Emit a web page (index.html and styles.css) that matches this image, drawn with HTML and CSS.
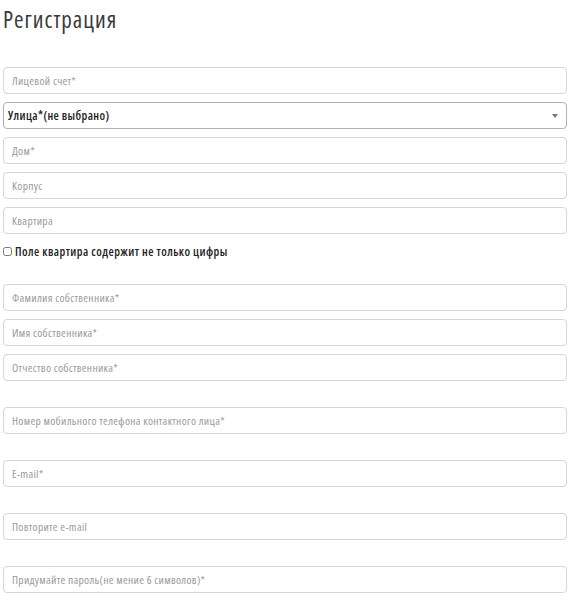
FILE: index.html
```html
<!DOCTYPE html>
<html lang="ru">
<head>
<meta charset="utf-8">
<title>Регистрация</title>
<link rel="stylesheet" href="styles.css">
</head>
<body>
<div class="page">
  <h1 class="title">Регистрация</h1>
  <form class="form">
    <div class="group">
      <input class="field" type="text" placeholder="Лицевой счет*">
      <div class="select">
        <span class="select-text">Улица*(не выбрано)</span>
        <span class="select-arrow"></span>
      </div>
      <input class="field" type="text" placeholder="Дом*">
      <input class="field" type="text" placeholder="Корпус">
      <input class="field" type="text" placeholder="Квартира">
    </div>
    <label class="check">
      <input class="check-box" type="checkbox">
      <span class="check-label">Поле квартира содержит не только цифры</span>
    </label>
    <div class="group group-owner">
      <input class="field" type="text" placeholder="Фамилия собственника*">
      <input class="field" type="text" placeholder="Имя собственника*">
      <input class="field" type="text" placeholder="Отчество собственника*">
    </div>
    <input class="field field-spaced" type="text" placeholder="Номер мобильного телефона контактного лица*">
    <input class="field field-spaced" type="text" placeholder="E-mail*">
    <input class="field field-spaced" type="text" placeholder="Повторите e-mail">
    <input class="field field-spaced" type="text" placeholder="Придумайте пароль(не мение 6 символов)*">
  </form>
</div>
</body>
</html>
```

FILE: styles.css
```css
* { box-sizing: border-box; }
html, body { margin: 0; padding: 0; background: #fff; }
body {
  font-family: "Open Sans", "DejaVu Sans Condensed", sans-serif;
  font-stretch: 75%;
  color: #333;
}
.page {
  padding: 6px 5px 0 3px;
}
.title {
  margin: 0;
  font-size: 23px;
  line-height: 26px;
  font-weight: normal;
  font-stretch: 75%;
  letter-spacing: 1px;
  color: #3a3a3a;
}
.form {
  display: flex;
  flex-direction: column;
  margin-top: 35px;
}
.group {
  display: flex;
  flex-direction: column;
  gap: 8px;
}
.field {
  display: block;
  width: 100%;
  height: 27px;
  margin: 0;
  padding: 0 8px;
  border: 1px solid #d6d6d6;
  border-radius: 4px;
  font-family: inherit;
  font-stretch: 75%;
  font-size: 11.5px;
  letter-spacing: 0.3px;
  color: #333;
  background: #fff;
  outline: none;
}
.field::placeholder { color: #9a9a9a; }
.select {
  display: flex;
  align-items: center;
  justify-content: space-between;
  height: 27px;
  padding: 0 8px 0 4px;
  border: 1px solid #b0b0b0;
  border-radius: 4px;
  background: #fff;
}
.select-text {
  font-size: 12px;
  color: #222;
  font-weight: 600;
  letter-spacing: 0.4px;
}
.select-arrow {
  width: 0;
  height: 0;
  border-left: 3px solid transparent;
  border-right: 3px solid transparent;
  border-top: 4px solid #777;
}
.check {
  display: flex;
  align-items: center;
  gap: 3px;
  height: 18px;
  margin-top: 8px;
}
.check-box {
  width: 9px;
  height: 9px;
  margin: 0;
}
.check-label {
  font-size: 12px;
  font-weight: 600;
  letter-spacing: 0.45px;
  color: #222;
}
.group-owner { margin-top: 24px; }
.field-spaced { margin-top: 26px; }
```
